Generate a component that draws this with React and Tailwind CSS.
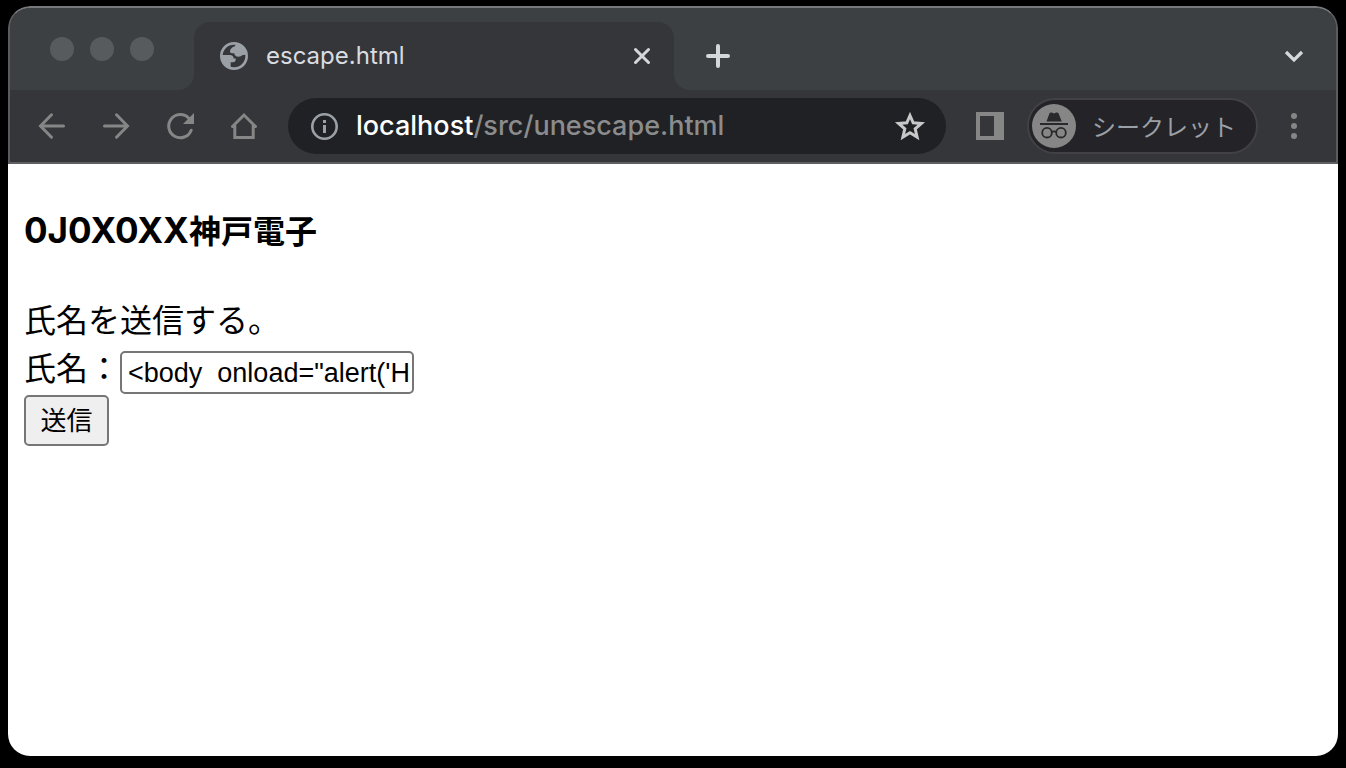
import React, { useState } from "react";

function IconButton({ label, children, className = "" }) {
  return (
    <button type="button" aria-label={label} className={`flex h-8 w-8 shrink-0 items-center justify-center ${className}`}>
      {children}
    </button>
  );
}

function TabFoot({ flip }) {
  return (
    <svg viewBox="0 0 16 16" className={flip ? "h-4 w-4 shrink-0 -scale-x-100" : "h-4 w-4 shrink-0"} aria-hidden="true">
      <path d="M16 0v16H0C9 16 16 9 16 0z" fill="#35363a" />
    </svg>
  );
}

function TabStrip() {
  return (
    <div className="flex h-[82px] items-end bg-[#3c4043]">
      <div className="flex w-[168px] shrink-0 gap-4 self-start pt-[29px] pl-10">
        <span className="h-6 w-6 rounded-full bg-[#575b5e]" />
        <span className="h-6 w-6 rounded-full bg-[#575b5e]" />
        <span className="h-6 w-6 rounded-full bg-[#575b5e]" />
      </div>
      <TabFoot />
      <div className="flex h-[68px] w-[480px] items-center rounded-t-2xl bg-[#35363a] pr-4 pl-6">
        <svg viewBox="0 0 24 24" className="h-8 w-8 shrink-0" fill="#9aa0a6" aria-hidden="true">
          <circle cx="12" cy="12" r="9.500" fill="none" stroke="#9aa0a6" strokeWidth="2" />
          <path d="M13.500 3 12.500 4.800C10.500 5.200 9.200 6.500 9 8.300c-.1 1.100.6 1.700 1.700 1.700h1.500c.3 1.700 1.300 2.600 3 2.600 1.500 0 2.400-.7 3.500-1.300l2.800-.3C21.500 6.500 18.300 3.200 13.500 3z" />
          <path d="M2.300 11.200h6.500c2 0 2.900 1 2.900 2.600h1.600c.1 1.900-.6 2.900-2.300 2.900H9.500v4.600C5 20.500 2.200 17 2.300 11.200z" />
        </svg>
        <span className="ml-4 flex-1 font-[Inter,sans-serif] text-2xl text-[#dadce0]">escape.html</span>
        <IconButton label="Close tab">
          <svg viewBox="0 0 32 32" className="h-8 w-8" stroke="#d5d7da" strokeWidth="3" strokeLinecap="round">
            <path d="m9.500 9.500 13 13M22.500 9.500l-13 13" />
          </svg>
        </IconButton>
      </div>
      <TabFoot flip />
      <div className="flex h-[68px] flex-1 items-center pr-[26px] pl-3">
        <IconButton label="New tab">
          <svg viewBox="0 0 32 32" className="h-8 w-8" stroke="#d5d7da" strokeWidth="4" strokeLinecap="round">
            <path d="M16 6v20M6 16h20" />
          </svg>
        </IconButton>
        <IconButton label="Search tabs" className="ml-auto">
          <svg viewBox="0 0 32 32" className="h-8 w-8" fill="none" stroke="#d5d7da" strokeWidth="3.200">
            <path d="m8 12 8 8 8-8" />
          </svg>
        </IconButton>
      </div>
    </div>
  );
}

function Toolbar() {
  const stroke = { fill: "none", stroke: "#868686", strokeWidth: 3, viewBox: "0 0 32 32" };
  return (
    <div className="flex h-[74px] items-center border-b-2 border-[#5f6062] bg-[#35363a] px-[26px]">
      <div className="flex gap-8">
        <IconButton label="Back">
          <svg {...stroke} className="h-8 w-8" strokeLinecap="round">
            <path d="M27.500 16H5M15.500 4.800 4.500 16l11 11.200" />
          </svg>
        </IconButton>
        <IconButton label="Forward">
          <svg {...stroke} className="h-8 w-8" strokeLinecap="round">
            <path d="M4.500 16H27M16.500 4.800l11 11.200-11 11.200" />
          </svg>
        </IconButton>
        <IconButton label="Reload">
          <svg {...stroke} className="h-8 w-8" strokeLinecap="round">
            <path d="M24.800 8.200A11.600 11.600 0 1 0 27.200 20.200" />
            <path d="M30 3v11H19z" fill="#868686" stroke="none" />
          </svg>
        </IconButton>
        <IconButton label="Home">
          <svg {...stroke} className="h-8 w-8" strokeLinecap="round">
            <path d="M4.500 16.500 16 5l11.500 11.500M6.800 15.500v12h18.400v-12" />
          </svg>
        </IconButton>
      </div>
      <div className="ml-7 flex h-14 flex-1 items-center rounded-full bg-[#202124] pr-5 pl-5">
        <svg viewBox="0 0 32 32" className="h-8 w-8 shrink-0" aria-hidden="true">
          <circle cx="16.500" cy="16.500" r="12.200" fill="none" stroke="#9aa0a6" strokeWidth="2.600" />
          <path d="M15 10h3v3h-3zM15 15h3v8h-3z" fill="#9aa0a6" />
        </svg>
        <div className="ml-4 flex-1 font-[Inter,sans-serif] text-[27px] font-medium whitespace-nowrap text-[#8b8c8e]">
          <span className="text-white">localhost</span>/src/unescape.html
        </div>
        <IconButton label="Bookmark this page">
          <svg viewBox="0 0 32 32" className="h-8 w-8" fill="none" stroke="#c8c8c8" strokeWidth="3">
            <path d="m16 5.500 3.200 7.300 8.200.7-6.200 5.400 1.900 8.100-7.100-4.300-7.100 4.300 1.900-8.100-6.200-5.400 8.200-.7z" />
          </svg>
        </IconButton>
      </div>
      <IconButton label="Side panel" className="ml-7">
        <svg viewBox="0 0 32 32" className="h-8 w-8">
          <path d="M2 2h28v28H2zM6 6v20h14V6z" fill="#868686" fillRule="evenodd" />
        </svg>
      </IconButton>
      <button
        type="button"
        className="ml-[21px] flex h-14 items-center rounded-full border-2 border-[#424145] bg-[#242328] pr-5 pl-[3px] text-2xl text-[#9aa0a6]"
      >
        <svg viewBox="0 0 44 44" className="h-11 w-11" fill="none" stroke="#29292c" strokeWidth="1.800" aria-hidden="true">
          <circle cx="22" cy="22" r="22" fill="#868686" stroke="none" />
          <path d="M14.500 17.500 17.500 9.300Q18.200 8 19.800 8.600L22 9.500 24.200 8.600Q25.800 8 26.500 9.300L29.800 17.500z" fill="#29292c" stroke="none" />
          <path d="M8 20h28" strokeWidth="2" />
          <circle cx="15" cy="28.700" r="4.800" />
          <circle cx="29" cy="28.700" r="4.800" />
          <path d="M19.600 28.200q2.400-1.500 4.800 0" />
        </svg>
        <span className="ml-4 font-['Noto_Sans_CJK_JP',sans-serif]">シークレット</span>
      </button>
      <IconButton label="Menu" className="ml-5">
        <svg viewBox="0 0 32 32" className="h-8 w-8" fill="#868686">
          <circle cx="16" cy="6" r="3" />
          <circle cx="16" cy="16" r="3" />
          <circle cx="16" cy="26" r="3" />
        </svg>
      </IconButton>
    </div>
  );
}

function Page() {
  const [name, setName] = useState("<body  onload=\"alert('H");
  return (
    <main className="flex-1 bg-white px-4 pt-[41px] font-['Noto_Sans_CJK_JP',sans-serif] text-[32px] leading-12 text-black">
      <h1 className="font-bold">
        <span className="font-[Inter,sans-serif] text-[35px]">0J0X0XX</span>神戸電子
      </h1>
      <form className="mt-10" onSubmit={(e) => e.preventDefault()}>
        <p>氏名を送信する。</p>
        <div className="flex items-start pb-px">
          <label htmlFor="name">氏名：</label>
          <input
            id="name"
            type="text"
            value={name}
            onChange={(e) => setName(e.target.value)}
            className="mt-[9px] h-[43px] w-[294px] rounded-[5px] border-2 border-[#767676] pr-0.5 pl-1.5 font-['Liberation_Sans',sans-serif] text-[27px]"
          />
        </div>
        <button
          type="submit"
          className="flex h-[51px] w-[85px] items-center justify-center rounded-[5px] border-2 border-[#767676] bg-[#efefef] pb-1 text-[26px]"
        >
          送信
        </button>
      </form>
    </main>
  );
}

export default function App() {
  return (
    <div className="flex min-h-screen flex-col bg-black px-2 pt-1.5 pb-3">
      <div className="flex flex-1 flex-col overflow-hidden rounded-[22px]">
        <header className="overflow-hidden rounded-t-[22px] border-x-2 border-t-2 border-x-[#5a5b5e] border-t-[#77787b] bg-[#3c4043]">
          <TabStrip />
          <Toolbar />
        </header>
        <Page />
      </div>
    </div>
  );
}
